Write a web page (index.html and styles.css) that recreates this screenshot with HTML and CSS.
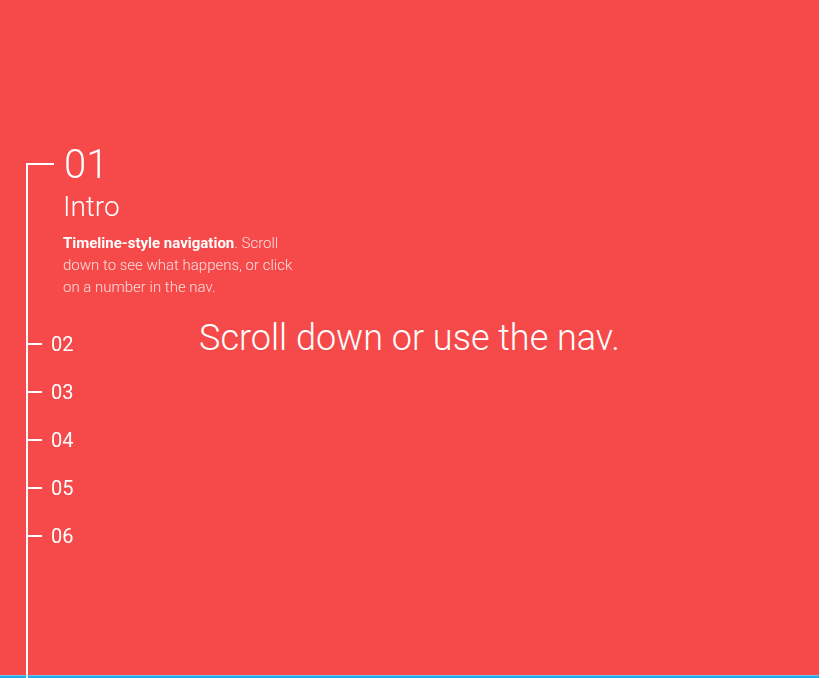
FILE: index.html
```html
<!DOCTYPE html>
<html lang="en">

<head>
    <meta charset="UTF-8" />
    <title>Timeline navigation</title>
    <link rel="stylesheet" href="styles.css">
</head>

<body>
    <nav class="timeline">
        <ul>
            <li class="active">
                <a href="#s1" class="num"><span class="tick"></span>01</a>
                <div class="info">
                    <h2>Intro</h2>
                    <p><strong>Timeline-style navigation</strong>. Scroll down to see what happens, or click on a number in the nav.</p>
                </div>
            </li>
            <li><a href="#s2" class="num"><span class="tick"></span>02</a></li>
            <li><a href="#s3" class="num"><span class="tick"></span>03</a></li>
            <li><a href="#s4" class="num"><span class="tick"></span>04</a></li>
            <li><a href="#s5" class="num"><span class="tick"></span>05</a></li>
            <li><a href="#s6" class="num"><span class="tick"></span>06</a></li>
        </ul>
    </nav>

    <main class="panels">
        <section class="panel red" id="s1">
            <h1>Scroll down or use the nav.</h1>
        </section>
        <section class="panel blue" id="s2"></section>
        <section class="panel green" id="s3"></section>
        <section class="panel yellow" id="s4"></section>
        <section class="panel purple" id="s5"></section>
        <section class="panel dark" id="s6"></section>
    </main>
</body>

</html>
```

FILE: styles.css
```css
* {
    box-sizing: border-box;
}

body {
    margin: 0;
    background: #fff;
    font-family: 'Roboto Slab', 'Roboto', sans-serif;
    font-weight: 300;
    color: #fff;
}

/* SECTIONS */
.panels {
    margin-right: 17px;
}

.panel {
    height: 675px;
    display: flex;
    align-items: center;
    justify-content: center;
}

.panel h1 {
    margin: 0;
    font-size: 36px;
    font-weight: 300;
}

.red {
    background-color: #f64a4a;
}

.blue {
    background-color: #26a8e6;
    box-shadow: inset 0 1px 0 #6cc6f0;
}

.green {
    background-color: #2ecc71;
}

.yellow {
    background-color: #f1c40f;
}

.purple {
    background-color: #9b59b6;
}

.dark {
    background-color: #34495e;
}

/* TIMELINE NAV */
.timeline {
    position: fixed;
    top: 0;
    bottom: 0;
    left: 26px;
    z-index: 10;
}

.timeline::before {
    content: "";
    position: absolute;
    left: 0;
    top: 163px;
    bottom: 0;
    width: 2px;
    background: #fff;
}

.timeline ul {
    list-style: none;
    margin: 0;
    padding: 144px 0 0;
}

.timeline li {
    margin-bottom: 24px;
}

.num {
    display: flex;
    align-items: center;
    gap: 9px;
    height: 24px;
    color: #fff;
    text-decoration: none;
    font-size: 20px;
    font-weight: 400;
}

.tick {
    width: 16px;
    height: 2px;
    background: #fff;
}

.active {
    padding-bottom: 10px;
}

.active .num {
    height: 40px;
    gap: 10px;
    font-size: 40px;
    font-weight: 300;
}

.active .tick {
    width: 28px;
}

.info {
    padding-left: 37px;
}

.info h2 {
    margin: 6px 0 8px;
    font-size: 28px;
    line-height: 34px;
    font-weight: 300;
}

.info p {
    width: 235px;
    margin: 0;
    font-size: 15px;
    line-height: 22px;
    color: rgba(255, 255, 255, 0.82);
}

.info strong {
    color: #fff;
    font-weight: 700;
}
```
